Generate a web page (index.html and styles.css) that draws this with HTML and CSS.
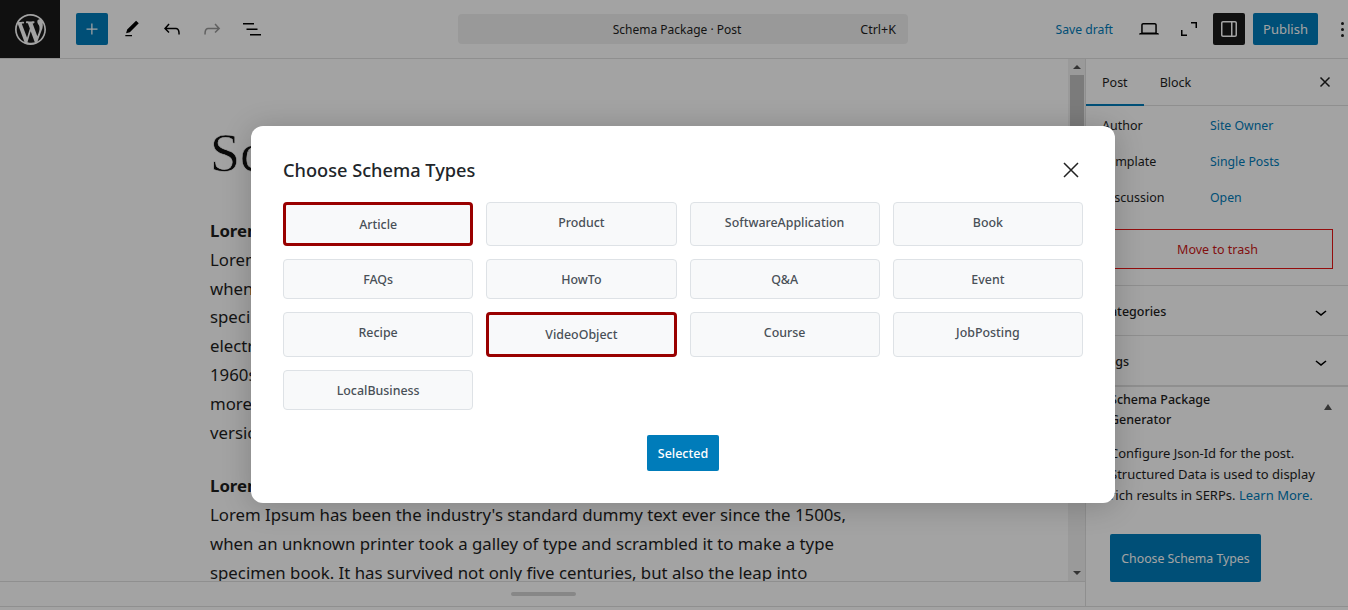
FILE: index.html
```html
<!DOCTYPE html>
<html>

<head>
  <title>Schema Package</title>
  <meta charset="UTF-8">
  <link rel="stylesheet" href="styles.css">
</head>

<body>
  <div class="topbar">
    <div class="wp-logo">
      <svg width="31" height="31" viewBox="0 0 20 20"><path fill="#fff" d="M20 10c0-5.520-4.480-10-10-10S0 4.480 0 10s4.480 10 10 10 10-4.480 10-10zM7.780 15.370L4.370 6.220c.55-.02 1.170-.08 1.170-.08.5-.06.44-1.130-.06-1.110 0 0-1.450.11-2.370.11-.18 0-.37 0-.58-.01C4.120 2.690 6.890 1.050 10 1.050c2.320 0 4.430.87 6.020 2.310-.67-.11-1.630.39-1.630 1.570 0 .74.41 1.360.86 2.080.35.61.56 1.360.56 2.450 0 1.480-1.400 4.960-1.400 4.960l-3.020-8.360c.54-.02.86-.17.86-.17.49-.05.43-1.250-.06-1.220 0 0-1.460.12-2.400.12-.87 0-2.330-.12-2.330-.12-.5-.03-.56 1.200-.06 1.220l.920.080 1.260 3.410zM17.410 10c.24-.64.740-1.870.43-4.250.7 1.290 1.050 2.710 1.050 4.250 0 3.290-1.730 6.240-4.400 7.780.97-2.590 1.940-5.200 2.920-7.780zM6.100 18.090C3.120 16.650 1.110 13.530 1.110 10c0-1.300.23-2.480.72-3.590C3.250 10.300 4.670 14.200 6.100 18.090zM10.130 11.080l2.560 6.940c.2.040.4.080.6.110-.89.31-1.720.480-2.750.48-.86 0-1.680-.13-2.480-.36z"/></svg>
    </div>
    <div class="tools">
      <button class="add-btn"><svg width="24" height="24" viewBox="0 0 24 24"><path fill="#fff" d="M11.250 12.750V17.500H12.500V12.750H17.500V11.500H12.500V6.500H11.250V11.500H6.500V12.750H11.250Z"/></svg></button>
      <span class="tool"><svg width="20" height="20" viewBox="0 0 24 24"><path d="M20.100 5.100L16.900 2 6.200 12.700l-1.300 4.400 4.500-1.300L20.100 5.100zM4 20.800h8v-1.500H4v1.500z"/></svg></span>
      <span class="tool"><svg width="24" height="24" viewBox="0 0 24 24"><path d="M18.300 11.700c-.6-.6-1.400-.9-2.300-.9H6.700l2.900-3.300-1.100-1-4.500 5L8.500 16l1-1-2.700-2.700H16c.5 0 .9.200 1.300.5 1 1 1 3.400 1 4.500v.3h1.500v-.2c0-1.500 0-4.300-1.500-5.700z"/></svg></span>
      <span class="tool off"><svg width="24" height="24" viewBox="0 0 24 24"><path d="M15.600 6.500l-1.100 1 2.900 3.300H8c-.9 0-1.700.3-2.300.9-1.400 1.500-1.400 4.200-1.400 5.600v.2h1.500v-.3c0-1.100 0-3.500 1-4.500.3-.3.700-.5 1.300-.5h9.200L14.500 15l1.100 1.100 4.600-4.600-4.600-5z"/></svg></span>
      <span class="tool"><svg width="24" height="24" viewBox="0 0 24 24"><path d="M3 6h11v1.500H3V6zm3.500 5.500h11V13h-11v-1.500zM10 17h11v1.500H10V17z"/></svg></span>
    </div>
    <div class="command">
      <span class="command-title">Schema Package · Post</span>
      <span class="command-key">Ctrl+K</span>
    </div>
    <div class="actions">
      <a class="save-draft">Save draft</a>
      <span class="tool"><svg width="24" height="24" viewBox="0 0 24 24"><path d="M20.500 16h-.7V8c0-1.100-.9-2-2-2H6.200c-1.100 0-2 .9-2 2v8h-.7c-.8 0-1.500.7-1.500 1.500h20c0-.8-.7-1.500-1.500-1.500zM5.700 8c0-.3.2-.5.500-.5h11.600c.3 0 .5.200.5.500v7.600H5.700V8z"/></svg></span>
      <span class="tool"><svg width="24" height="24" viewBox="0 0 24 24"><path d="M14 5h6v6h-1.500V6.500H14V5zM4 13h1.500v4.500H10V19H4v-6z"/></svg></span>
      <button class="panel-btn"><svg width="24" height="24" viewBox="0 0 24 24"><path fill="#fff" d="M18 4H6c-1.100 0-2 .9-2 2v12c0 1.100.9 2 2 2h12c1.100 0 2-.9 2-2V6c0-1.100-.9-2-2-2zM5.500 18V6c0-.3.2-.5.500-.5h8v13H6c-.3 0-.5-.2-.500-.5zm13 0c0 .3-.2.5-.5.500h-2.500v-13H18c.3 0 .5.200.5.500v12z"/></svg></button>
      <button class="publish">Publish</button>
      <span class="dots"><i></i><i></i><i></i></span>
    </div>
  </div>

  <div class="main">
    <div class="editor">
      <div class="canvas">
        <div class="content">
          <h1 class="post-title">Schema Package</h1>
          <p><b>Lorem Ipsum</b><br>Lorem Ipsum is simply dummy text of the printing and typesetting industry,<br>when an unknown printer took a galley of type and scrambled it to make a type<br>specimen book. It has survived not only five centuries, but also the leap into<br>electronic typesetting, remaining essentially unchanged. It was popularised in the<br>1960s with the release of Letraset sheets containing Lorem Ipsum passages, and<br>more recently with desktop publishing software like Aldus PageMaker including<br>versions of Lorem Ipsum.</p>
          <p><b>Lorem Ipsum</b><br>Lorem Ipsum has been the industry's standard dummy text ever since the 1500s,<br>when an unknown printer took a galley of type and scrambled it to make a type<br>specimen book. It has survived not only five centuries, but also the leap into</p>
        </div>
        <div class="scrollbar">
          <span class="arrow up"></span>
          <span class="thumb"></span>
          <span class="arrow down"></span>
        </div>
      </div>
      <div class="resize-bar"><span class="handle"></span></div>
    </div>

    <div class="sidebar">
      <div class="tabs">
        <span class="tab active">Post</span>
        <span class="tab">Block</span>
        <svg class="tabs-close" width="24" height="24" viewBox="0 0 24 24"><path d="M7.500 7.500l9 9M16.500 7.500l-9 9" stroke="#1e1e1e" stroke-width="1.500" fill="none"/></svg>
      </div>
      <div class="summary">
        <div class="row"><span>Author</span><a>Site Owner</a></div>
        <div class="row"><span>Template</span><a>Single Posts</a></div>
        <div class="row"><span>Discussion</span><a>Open</a></div>
        <div class="trash">Move to trash</div>
      </div>
      <div class="panel"><span>Categories</span><svg width="24" height="24" viewBox="0 0 24 24"><path d="M17.500 11.600L12 16l-5.500-4.400.9-1.200L12 14l4.500-3.600 1 1.200z"/></svg></div>
      <div class="panel"><span>Tags</span><svg width="24" height="24" viewBox="0 0 24 24"><path d="M17.500 11.600L12 16l-5.500-4.400.9-1.200L12 14l4.500-3.600 1 1.200z"/></svg></div>
      <div class="schema">
        <div class="schema-head"><span>Schema Package<br>Generator</span><i class="caret"></i></div>
        <p>Configure Json-Id for the post. Structured Data is used to display rich results in SERPs. <a>Learn More.</a></p>
        <button class="choose">Choose Schema Types</button>
      </div>
    </div>
  </div>

  <div class="scrim"></div>

  <div class="modal">
    <div class="modal-head">
      <h2>Choose Schema Types</h2>
      <svg width="18" height="18" viewBox="0 0 18 18"><path d="M2 2l14 14M16 2L2 16" stroke="#222" stroke-width="1.500" fill="none"/></svg>
    </div>
    <div class="types">
      <div class="type selected">Article</div>
      <div class="type">Product</div>
      <div class="type">SoftwareApplication</div>
      <div class="type">Book</div>
      <div class="type">FAQs</div>
      <div class="type">HowTo</div>
      <div class="type">Q&amp;A</div>
      <div class="type">Event</div>
      <div class="type">Recipe</div>
      <div class="type selected">VideoObject</div>
      <div class="type">Course</div>
      <div class="type">JobPosting</div>
      <div class="type">LocalBusiness</div>
    </div>
    <div class="modal-foot"><button class="selected-btn">Selected</button></div>
  </div>
</body>

</html>
```

FILE: styles.css
```css
* {
  box-sizing: border-box;
}

html,
body {
  height: 610px;
}

body {
  margin: 0;
  overflow: hidden;
  position: relative;
  background: #fff;
  color: #1e1e1e;
  font-family: "Noto Sans", sans-serif;
  font-size: 12.500px;
}

button {
  font-family: inherit;
  border: 0;
}

/* top bar */
.topbar {
  height: 59px;
  display: flex;
  align-items: center;
  border-bottom: 1px solid #e0e0e0;
}

.wp-logo {
  width: 60px;
  height: 58px;
  background: #1a1a1a;
  display: flex;
  align-items: center;
  justify-content: center;
}

.tools {
  display: flex;
  align-items: center;
  margin-left: 16px;
  gap: 8px;
}

.add-btn {
  width: 32px;
  height: 32px;
  padding: 4px;
  border-radius: 2px;
  background: #007cba;
}

.tool {
  width: 32px;
  height: 32px;
  display: flex;
  align-items: center;
  justify-content: center;
}

.tool.off {
  opacity: 0.4;
}

.command {
  width: 450px;
  height: 30px;
  margin-left: 190px;
  padding-right: 12px;
  border-radius: 4px;
  background: #f0f0f0;
  display: flex;
  align-items: center;
  position: relative;
  justify-content: center;
  font-size: 12px;
}

.command-key {
  position: absolute;
  right: 12px;
  font-size: 12.500px;
}

.actions {
  margin-left: auto;
  display: flex;
  align-items: center;
  gap: 8px;
}

.save-draft {
  color: #007cba;
  font-size: 12.200px;
  margin-right: 12px;
}

.panel-btn {
  width: 32px;
  height: 32px;
  padding: 4px;
  border-radius: 2px;
  background: #1a1a1a;
}

.publish {
  width: 65px;
  height: 32px;
  border-radius: 2px;
  background: #007cba;
  color: #fff;
  font-size: 13px;
}

.dots {
  width: 22px;
  padding-left: 10px;
  display: flex;
  flex-direction: column;
  align-items: center;
  gap: 3px;
}

.dots i {
  width: 3px;
  height: 3px;
  border-radius: 50%;
  background: #1e1e1e;
}

/* editor */
.main {
  display: flex;
  height: 548px;
  border-bottom: 1px solid #e0e0e0;
}

.editor {
  flex: 1;
  display: flex;
  flex-direction: column;
  border-right: 1px solid #e0e0e0;
}

.canvas {
  height: 523px;
  display: flex;
  overflow: hidden;
  border-bottom: 1px solid #e0e0e0;
}

.content {
  flex: 1;
  padding-left: 210px;
  font-size: 16.800px;
  line-height: 28.800px;
  white-space: nowrap;
  overflow: hidden;
}

.post-title {
  margin: 61px 0 31px;
  font-family: "Liberation Serif", serif;
  font-weight: 400;
  font-size: 54px;
  line-height: 66px;
  color: #111;
  -webkit-text-stroke: 0.6px #fff;
}

.content p {
  margin: 0 0 25px;
}

.scrollbar {
  width: 17px;
  background: #f1f1f1;
  display: flex;
  flex-direction: column;
  align-items: center;
}

.thumb {
  width: 14px;
  flex: 1;
  margin: 0 0 300px 1px;
  background: #c1c1c1;
}

.arrow {
  width: 0;
  height: 0;
  margin: 6px 0;
  border: 4px solid transparent;
}

.arrow.up {
  border-top: 0;
  border-bottom-color: #505050;
}

.arrow.down {
  border-bottom: 0;
  border-top-color: #505050;
}

.resize-bar {
  flex: 1;
  display: flex;
  align-items: center;
  justify-content: center;
}

.handle {
  width: 65px;
  height: 4px;
  border-radius: 2px;
  margin-left: 1px;
  background: #d4d4d4;
}

/* sidebar */
.sidebar {
  width: 262px;
  overflow: hidden;
}

.tabs {
  height: 47px;
  display: flex;
  align-items: center;
  border-bottom: 1px solid #e0e0e0;
}

.tab {
  height: 47px;
  line-height: 48px;
  padding: 0 16px;
}

.tab.active {
  border-bottom: 2px solid #007cba;
}

.tabs-close {
  margin-left: auto;
  margin-right: 11px;
}

.summary {
  padding: 11px 15px 16px 16px;
  border-bottom: 1px solid #e0e0e0;
}

.row {
  display: flex;
  height: 36px;
  line-height: 18px;
}

.row span {
  width: 108px;
}

.row a {
  font-size: 12.300px;
}

.row a,
.schema a {
  color: #007cba;
}

.trash {
  height: 40px;
  margin-top: 4px;
  line-height: 40px;
  text-align: center;
  border: 1px solid #e81515;
  color: #cc1818;
}

.panel {
  height: 50px;
  display: flex;
  align-items: center;
  justify-content: space-between;
  padding: 2px 15px 0 16px;
  border-bottom: 1px solid #e0e0e0;
  font-weight: 500;
}

.schema {
  padding: 3px 16px 0 24px;
  border-top: 1px solid #e0e0e0;
}

.schema-head {
  display: flex;
  justify-content: space-between;
  font-weight: 500;
  line-height: 20px;
}

.caret {
  width: 0;
  height: 0;
  margin: 14px 0 0;
  border: 4px solid transparent;
  border-top: 0;
  border-bottom: 6px solid #555;
}

.schema p {
  margin: 13px 0 28px;
  line-height: 21px;
  font-size: 13px;
}

.choose {
  width: 151px;
  height: 48px;
  border-radius: 2px;
  background: #007cba;
  color: #fff;
  font-size: 12.300px;
}

/* modal */
.scrim {
  position: absolute;
  inset: 0;
  background: rgba(0, 0, 0, 0.36);
}

.modal {
  position: absolute;
  left: 251px;
  top: 126px;
  width: 864px;
  height: 377px;
  padding: 0 32px;
  border-radius: 12px;
  background: #fff;
  box-shadow: 0 3px 30px rgba(0, 0, 0, 0.2);
}

.modal-head {
  height: 76px;
  display: flex;
  align-items: center;
  justify-content: space-between;
  padding-top: 12px;
  padding-right: 3px;
}

.modal-head h2 {
  margin: 0;
  font-size: 18.200px;
  font-weight: 500;
  color: #212529;
}

.types {
  display: grid;
  grid-template-columns: repeat(4, 1fr);
  grid-template-rows: 44px 40px 45px 40px;
  gap: 13px;
}

.type {
  padding-top: 10px;
  border: 1px solid #dee2e6;
  border-radius: 4px;
  background: #f8f9fa;
  text-align: center;
  font-size: 12.400px;
  line-height: 19px;
  font-weight: 500;
  color: #495057;
}

.type.selected {
  border: 3px solid #990000;
}

.modal-foot {
  margin-top: 25px;
  text-align: center;
}

.selected-btn {
  width: 72px;
  height: 36px;
  border-radius: 2px;
  background: #007cba;
  color: #fff;
  font-size: 12.500px;
  font-weight: 500;
}
```
